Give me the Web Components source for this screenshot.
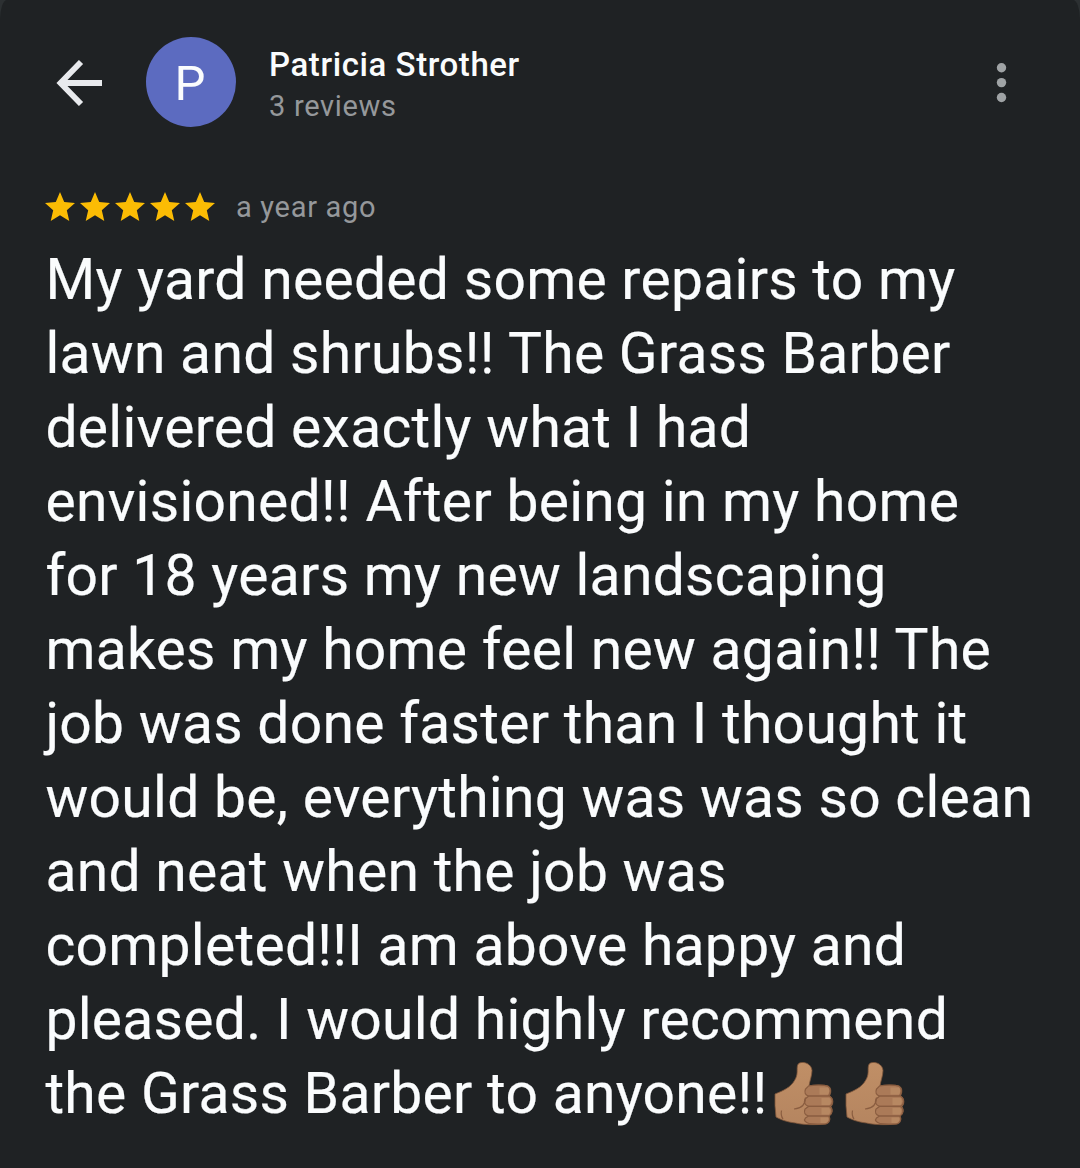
<!DOCTYPE html>
<html lang="en">
<head>
<meta charset="utf-8">
<meta name="viewport" content="width=device-width, initial-scale=1">
<title>Review</title>
<style>
  html {
    background: #2c3032;
  }

  body {
    margin: 0;
    font-family: Roboto, 'Noto Sans', sans-serif;
    color: #fafcfd;
  }
</style>
</head>
<body>
<review-sheet>
  <review-header slot="header" initial="P">
    <span slot="name">Patricia Strother</span>
    <span slot="count">3 reviews</span>
  </review-header>
  <star-rating slot="meta" value="5">a year ago</star-rating>
  <review-text>My yard needed some repairs to my lawn and shrubs!! The Grass Barber delivered exactly what I had envisioned!! After being in my home for 18 years my new landscaping makes my home feel new again!! The job was done faster than I thought it would be, everything was was so clean and neat when the job was completed!!I am above happy and pleased. I would highly recommend the Grass Barber to anyone!!<thumbs-up></thumbs-up><thumbs-up></thumbs-up></review-text>
</review-sheet>

<script>
class ReviewSheet extends HTMLElement {
  connectedCallback() {
    this.attachShadow({ mode: 'open' });
    this.shadowRoot.innerHTML = `
      <style>
        :host {
          display: flex;
          flex-direction: column;
          box-sizing: border-box;
          width: 1080px;
          height: 1168px;
          padding: 37px 40px 0 46px;
          background: #1f2224;
          border-radius: 7px 7px 0 0 / 20px 20px 0 0;
          overflow: hidden;
        }

        .meta {
          margin-top: 62px;
        }

        .body {
          margin: 17px 0 0 -0.6px;
        }
      </style>
      <slot name="header"></slot>
      <div class="meta"><slot name="meta"></slot></div>
      <div class="body"><slot></slot></div>
    `;
  }
}

class ReviewHeader extends HTMLElement {
  connectedCallback() {
    this.attachShadow({ mode: 'open' });
    this.shadowRoot.innerHTML = `
      <style>
        :host {
          display: flex;
          align-items: center;
          height: 90px;
        }

        svg {
          display: block;
          flex: none;
        }

        .back {
          margin: 2px 44px 0 10px;
        }

        .avatar {
          display: flex;
          align-items: center;
          justify-content: center;
          flex: none;
          box-sizing: border-box;
          width: 90px;
          height: 90px;
          padding: 3px 2px 0 0;
          border-radius: 50%;
          background: #5c6bc0;
          font-size: 49px;
          line-height: 87px;
        }

        .who {
          flex: 1;
          margin: 6px 0 0 33px;
        }

        .name {
          font-size: 33px;
          font-weight: 500;
          line-height: 42px;
          letter-spacing: 0.58px;
        }

        .count {
          font-size: 29px;
          line-height: 41px;
          letter-spacing: 0.7px;
          color: #95989b;
        }

        .more {
          margin: 2px 32px 0 0;
        }
      </style>
      <svg class="back" width="46" height="46" viewBox="0 0 46 46" fill="none" stroke="#e8eaed" stroke-width="5.8">
        <path d="M46 23H5M25 2L4.500 23l20.500 21"/>
      </svg>
      <div class="avatar">${this.getAttribute('initial')}</div>
      <div class="who">
        <div class="name"><slot name="name"></slot></div>
        <div class="count"><slot name="count"></slot></div>
      </div>
      <svg class="more" width="12" height="40" viewBox="0 0 12 40" fill="#9fa3a5">
        <circle cx="5.5" cy="4.8" r="4.7"/>
        <circle cx="5.5" cy="19.6" r="4.7"/>
        <circle cx="5.5" cy="34.500" r="4.7"/>
      </svg>
    `;
  }
}

class StarRating extends HTMLElement {
  connectedCallback() {
    const star = `
      <svg width="30" height="29" viewBox="2 2 20 19" preserveAspectRatio="none" fill="#fbbc04">
        <path d="M12 17.27L18.18 21l-1.64-7.03L22 9.24l-7.19-.61L12 2 9.19 8.63 2 9.24l5.46 4.73L5.82 21z"/>
      </svg>`;
    this.attachShadow({ mode: 'open' });
    this.shadowRoot.innerHTML = `
      <style>
        :host {
          display: flex;
          align-items: center;
          height: 37px;
        }

        .stars {
          display: flex;
          gap: 5px;
          margin: 0 21.5px 2px -1.5px;
        }

        svg {
          display: block;
        }

        .when {
          font-size: 29px;
          line-height: 37px;
          letter-spacing: 0.7px;
          color: #95989b;
        }
      </style>
      <div class="stars">${star.repeat(Number(this.getAttribute('value')))}</div>
      <div class="when"><slot></slot></div>
    `;
  }
}

class ReviewText extends HTMLElement {
  connectedCallback() {
    this.attachShadow({ mode: 'open' });
    this.shadowRoot.innerHTML = `
      <style>
        :host {
          display: block;
          font-size: 57px;
          line-height: 74px;
          letter-spacing: 0.28px;
          -webkit-text-stroke: 0.2px currentColor;
        }
      </style>
      <slot></slot>
    `;
  }
}

class ThumbsUp extends HTMLElement {
  connectedCallback() {
    this.attachShadow({ mode: 'open' });
    this.shadowRoot.innerHTML = `
      <style>
        :host {
          display: inline-block;
          width: 71px;
          height: 64px;
          margin-bottom: -13px;
          vertical-align: baseline;
        }

        svg {
          display: block;
          overflow: visible;
        }
      </style>
      <svg width="71" height="64" viewBox="-4.5 0.5 71 64">
        <defs>
          <linearGradient id="skin" x1="0" y1="0" x2="0" y2="1">
            <stop offset="0" stop-color="#c08f66"/>
            <stop offset="1" stop-color="#b58560"/>
          </linearGradient>
        </defs>
        <path fill="url(#skin)" stroke="#7d563a" stroke-width="0.8" d="M27 1.500C31-.2 39 2 39.500 9C39.500 14 37 20 36.500 24.500C43 23 52 23.500 55.500 24.500C59 26 59 31 57 34.500C61.500 37 61 42.500 58.500 45C61 49 59.500 53 56.500 54.500C58 58 56.500 62 53 62.500C43 63.500 31 63.500 23 61.500C14 60.500 8 58 3.500 55.500Q2 44 2.500 32.500C11 29 18 26 22 19C26 13 24 8 25 4Q25.500 2 27 1.500Z"/>
        <g fill="#ab7a58" stroke="#8a5d40" stroke-width="1.200">
          <path d="M36 24.500C42 23.200 52 23.300 55.500 24.800C58.500 26.500 58.500 32.500 55.500 34.500H36Q31 33 33 27.500Z"/>
          <path d="M36 34.700H57C61 36.500 61 43 57 44.800H36Q30.500 43 32.500 37.500Z"/>
          <path d="M36 44.900H57C60.500 47 60 52.500 56.500 54.500H36Q30.500 53 32.500 47.500Z"/>
          <path d="M36 54.600H56C58.500 57 57 61.800 53 62.300Q44 63 37 62.200Q30 60 33 56.500Z"/>
        </g>
        <path fill="#b78862" d="M47 26h8.500q2.500 3 0 7H47zM49 36.500h8q2.500 3.500 0 7H49zM49 46.500h7.500q2.500 3 0 6.500H49zM48 56h7.500q1.500 3-2 5.500H48z"/>
        <path fill="none" stroke="#8a5d40" stroke-width="1.200" d="M33 36C33 43 29 47 21.500 47.500M9 49Q8 54 10.500 57.500"/>
      </svg>
    `;
  }
}

customElements.define('review-sheet', ReviewSheet);
customElements.define('review-header', ReviewHeader);
customElements.define('star-rating', StarRating);
customElements.define('review-text', ReviewText);
customElements.define('thumbs-up', ThumbsUp);
</script>
</body>
</html>
